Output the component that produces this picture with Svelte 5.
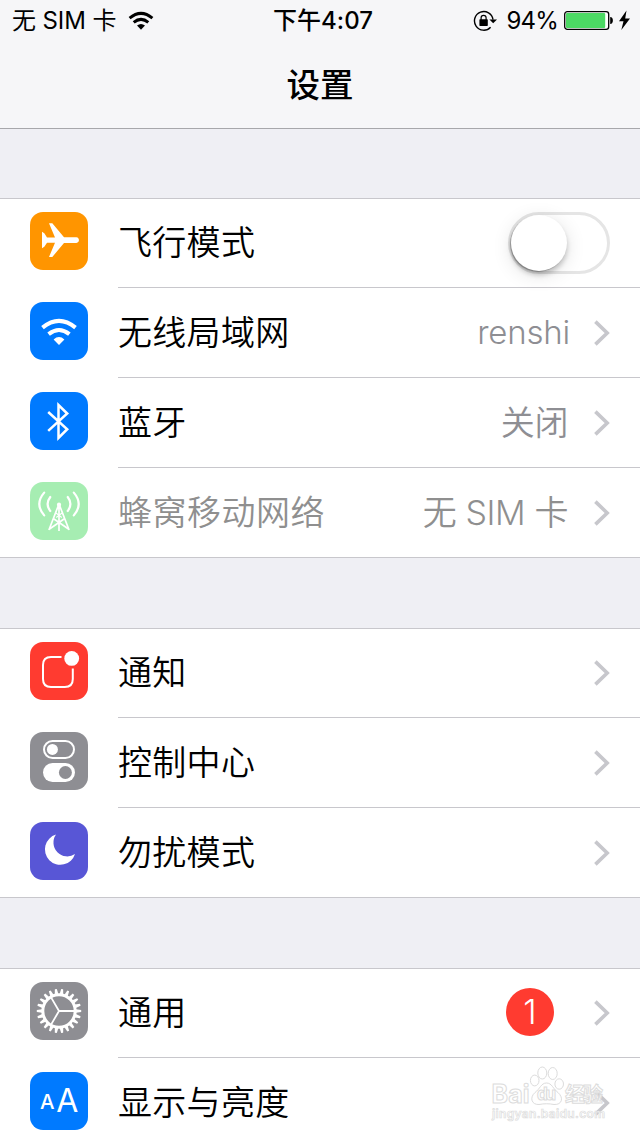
<script>
  const groups = [
    [
      { icon: 'plane', color: '#ff9500', label: '飞行模式', toggle: true },
      { icon: 'wifi', color: '#007aff', label: '无线局域网', value: 'renshi' },
      { icon: 'bluetooth', color: '#007aff', label: '蓝牙', value: '关闭', cjk: true },
      { icon: 'cellular', color: '#a6edb2', label: '蜂窝移动网络', value: '无 SIM 卡', cjk: true, disabled: true }
    ],
    [
      { icon: 'notify', color: '#ff3b30', label: '通知' },
      { icon: 'control', color: '#8e8e93', label: '控制中心' },
      { icon: 'moon', color: '#5856d6', label: '勿扰模式' }
    ],
    [
      { icon: 'gear', color: '#8e8e93', label: '通用', badge: 1 },
      { icon: 'display', color: '#007aff', label: '显示与亮度' }
    ]
  ];
  const teeth = Array.from({ length: 22 }, (_, i) => (i * 360) / 22);
</script>

<div class="screen">
  <header>
    <div class="status">
      <div class="side">
        <span class="carrier">无 SIM 卡</span>
        <svg width="26" height="20" viewBox="0 0 26 20">
          <g fill="none" stroke="#000" stroke-width="3">
            <path d="M1.6 7.2Q13 -2.4 24.4 7.2" />
            <path d="M5.7 11.4Q13 5.4 20.3 11.4" />
          </g>
          <path d="M9 14.6Q13 11.4 17 14.6L13 18.8Z" />
        </svg>
      </div>
      <div class="time">下午<b>4:07</b></div>
      <div class="side right">
        <svg class="lock" width="24" height="22" viewBox="0 0 24 22">
          <path d="M17.6 17.2A9.3 9.3 0 1 1 20 9.6" fill="none" stroke="#000" stroke-width="1.4" />
          <path d="M16.4 9.4H24L20.2 13.2Z" />
          <rect x="6.4" y="9.3" width="8.4" height="6.6" rx=".6" />
          <path d="M8.1 10V7.8a2.5 2.5 0 0 1 5 0v2.2" fill="none" stroke="#000" stroke-width="1.2" />
        </svg>
        <span class="percent">94%</span>
        <svg width="68" height="22" viewBox="0 0 68 22">
          <rect x=".7" y="1.7" width="44" height="17.6" rx="2.6" fill="#fff" stroke="#000" stroke-width="1.3" />
          <rect x="2" y="3" width="39.2" height="15" rx="1" fill="#4cd964" />
          <path d="M46.2 7c3.6 0 3.6 7 0 7Z" />
          <path d="M62.5.5L55 11.3H59.5L57.3 20L66 8.6H61.2Z" />
        </svg>
      </div>
    </div>
    <h1>设置</h1>
  </header>

  {#each groups as rows}
    <section>
      {#each rows as row}
        <div class="row" class:disabled={row.disabled}>
          <svg class="icon" width="58" height="58" viewBox="0 0 58 58">
            <rect width="58" height="58" rx="13" fill={row.color} />
            {#if row.icon === 'plane'}
              <path fill="#fff" d="M12 19.7L14.3 21.3L17 25.4H25L19 11.3H22.3L34 25.2H46.4C49.8 25.6 49.8 30.6 46.4 31H34L22.3 45H19L25 30.8H17L14.3 34.8L12 36.3Z" />
            {:else if row.icon === 'wifi'}
              <g fill="none" stroke="#fff" stroke-width="4.1">
                <path d="M12.5 25.6Q29 12 45.5 25.6" />
                <path d="M18.6 32.1Q29 23.9 39.4 32.1" />
              </g>
              <path fill="#fff" d="M23.6 37.4Q29 32.6 34.4 37.4L29 43Z" />
            {:else if row.icon === 'bluetooth'}
              <path fill="none" stroke="#fff" stroke-width="2.5" d="M18.2 20L37.2 37.2L28.5 46V13L37.2 21.5L18.2 38.8" />
            {:else if row.icon === 'cellular'}
              <g fill="none" stroke="#fff" stroke-width="2.2" stroke-linecap="round">
                <path d="M20.3 15Q14.9 22 20.3 29M14.2 10.6Q4.400 22 14.2 33.4" />
                <path d="M37.7 15Q43.1 22 37.7 29M43.8 10.6Q53.600 22 43.8 33.4" />
              </g>
              <g fill="none" stroke="#fff" stroke-width="1.7">
                <path d="M29 22V49M28.6 23L18.9 48M29.4 23L39.1 48M18.8 47.5L34 37M39.2 47.5L24 37" />
                <path d="M26 31L31.8 35.5M32 31L26.2 35.5" stroke-width="1.2" />
              </g>
              <circle cx="29" cy="22.7" r="2.1" fill="#fff" />
            {:else if row.icon === 'notify'}
              <path fill="none" stroke="#fff" stroke-width="2" d="M31.5 15H21C15.5 15 13 17.5 13 23V37C13 42.5 15.5 45 21 45H34.8C40.3 45 42.8 42.5 42.8 37V26.5" />
              <circle cx="41.7" cy="16.4" r="7.4" fill="#fff" />
            {:else if row.icon === 'control'}
              <rect x="14" y="9" width="30" height="17" rx="8.5" fill="none" stroke="#fff" stroke-width="2" />
              <circle cx="22.4" cy="17.4" r="5.5" fill="#fff" />
              <rect x="13" y="31" width="32" height="19" rx="9.5" fill="#fff" />
              <circle cx="35.4" cy="40.5" r="6.5" fill={row.color} />
            {:else if row.icon === 'moon'}
              <path fill="#fff" d="M26 12.6A15.4 15.4 0 1 0 45 32A13.8 13.8 0 0 1 26 12.6Z" />
            {:else if row.icon === 'gear'}
              <circle cx="29" cy="29" r="16.2" fill="none" stroke="#fff" stroke-width="3" />
              {#each teeth as angle}
                <path fill="#fff" d="M46 27.2L51.2 28V30L46 30.8Z" transform="rotate({angle} 29 29)" />
              {/each}
              <path stroke="#fff" stroke-width="1.8" fill="none" d="M29 29H44.5M29 29L21.2 15.6M29 29L21.2 42.4" />
            {:else}
              <text x="10" y="36.6" font-size="20.5" font-weight="500" fill="#fff">A</text>
              <text x="26.3" y="40.3" font-size="32" font-weight="400" fill="#fff">A</text>
            {/if}
          </svg>
          <div class="body">
            <span class="label">{row.label}</span>
            {#if row.toggle}
              <span class="toggle"><span class="knob"></span></span>
            {:else}
              {#if row.value}<span class="value" class:cjk={row.cjk}>{row.value}</span>{/if}
              {#if row.badge}<span class="badge">{row.badge}</span>{/if}
              <svg class="chevron" width="18" height="28" viewBox="0 0 18 28">
                <path d="M3.4 2.6L15.2 14L3.4 25.4" fill="none" stroke="#c7c7cc" stroke-width="3.6" />
              </svg>
            {/if}
          </div>
        </div>
      {/each}
    </section>
  {/each}

  <svg class="watermark" width="130" height="72" viewBox="0 0 130 72">
    <g fill="#fff" fill-opacity=".75" stroke="#dcdcdc" stroke-width="1">
      <ellipse cx="48.7" cy="24.5" rx="4.3" ry="5.4" />
      <ellipse cx="56.3" cy="17" rx="4.5" ry="6" />
      <ellipse cx="66.7" cy="17.5" rx="4.5" ry="6" />
      <ellipse cx="73.2" cy="28" rx="4.3" ry="5.2" />
      <path d="M60.5 27C55 27 54 33 49 36.5C43 42 46 49 53 48.5C58 47.5 63 47.5 68 48.5C76 49 78 42 72 36.5C67 33 66 27 60.5 27Z" />
      <text x="5.5" y="46.5" font-size="25" font-weight="700" textLength="38">Bai</text>
      <text x="51" y="43.5" font-size="17" font-weight="700" textLength="19">du</text>
      <text x="79" y="45.5" font-size="20" font-weight="700" textLength="38">经验</text>
      <text x="6" y="61.5" font-size="12" font-weight="600" textLength="113" stroke-width=".7">jingyan.baidu.com</text>
    </g>
  </svg>
</div>

<style>
  :global(body) {
    margin: 0;
    overflow: hidden;
  }
  .screen {
    position: relative;
    width: 640px;
    height: 1136px;
    overflow: hidden;
    background: #efeff4;
    color: #000;
    font-family: Inter, 'Noto Sans CJK SC', sans-serif;
  }
  header {
    box-sizing: border-box;
    height: 129px;
    background: #f6f6f8;
    border-bottom: 1px solid #a7a7ab;
    margin-bottom: 69px;
  }
  .status {
    display: grid;
    grid-template-columns: 1fr auto 1fr;
    align-items: center;
    height: 40px;
    padding: 0 8px 0 12px;
    font-size: 24px;
    line-height: 42px;
    white-space: nowrap;
  }
  .side {
    display: flex;
    align-items: center;
    gap: 12px;
  }
  .carrier {
    font-weight: 380;
    letter-spacing: -0.1px;
  }
  .right {
    justify-content: flex-end;
    gap: 6px;
  }
  .percent {
    letter-spacing: -0.8px;
    font-weight: 380;
  }
  .lock {
    margin-right: 3px;
  }
  .time {
    font-weight: 500;
    transform: translateX(1px);
  }
  .time b {
    font-weight: 550;
    letter-spacing: 0.1px;
  }
  h1 {
    margin: 0;
    height: 90px;
    line-height: 90px;
    font-size: 33.5px;
    font-weight: 500;
    text-align: center;
  }
  section {
    background: #fff;
    box-shadow: inset 0 1px #c8c7cc;
    margin-bottom: 70px;
  }
  .row {
    display: flex;
    align-items: flex-start;
    height: 90px;
    padding-left: 30px;
  }
  .icon {
    flex: none;
    margin: 14px 30px 0 0;
  }
  .body {
    box-sizing: border-box;
    flex: 1;
    display: flex;
    align-items: center;
    height: 90px;
    padding-right: 30px;
    border-bottom: 1px solid #c8c7cc;
    font-size: 34px;
    line-height: 88px;
    white-space: nowrap;
  }
  .row:last-child {
    box-shadow: inset 0 -1px #c8c7cc;
  }
  .label {
    flex: 1;
    font-weight: 350;
    letter-spacing: 0.3px;
  }
  .value {
    color: #8e8e93;
    font-size: 33px;
    font-weight: 350;
    letter-spacing: -0.2px;
    margin-right: -1px;
    transform: translateY(-1px);
  }
  .cjk {
    font-size: 34px;
    letter-spacing: -0.4px;
    margin-right: 1px;
    transform: none;
  }
  .disabled .label,
  .disabled .value {
    color: #8f8f8f;
  }
  .disabled .label {
    letter-spacing: 0.5px;
  }
  .chevron {
    margin-left: 23px;
  }
  .badge {
    width: 48px;
    height: 48px;
    margin-right: 15px;
    border-radius: 50%;
    background: #ff3b30;
    color: #fff;
    font-weight: 350;
    line-height: 48px;
    text-align: center;
    transform: translateY(-1px);
  }
  .toggle {
    box-sizing: border-box;
    width: 102px;
    height: 62px;
    border: 3px solid #e5e5e5;
    border-radius: 31px;
  }
  .knob {
    display: block;
    width: 56px;
    height: 56px;
    border-radius: 50%;
    background: #fff;
    box-shadow: -1px 1px 1px rgba(0, 0, 0, 0.28), 0 4px 5px rgba(0, 0, 0, 0.2), 0 4px 20px rgba(0, 0, 0, 0.12);
  }
  .watermark {
    position: absolute;
    left: 486px;
    top: 1056px;
  }
</style>
